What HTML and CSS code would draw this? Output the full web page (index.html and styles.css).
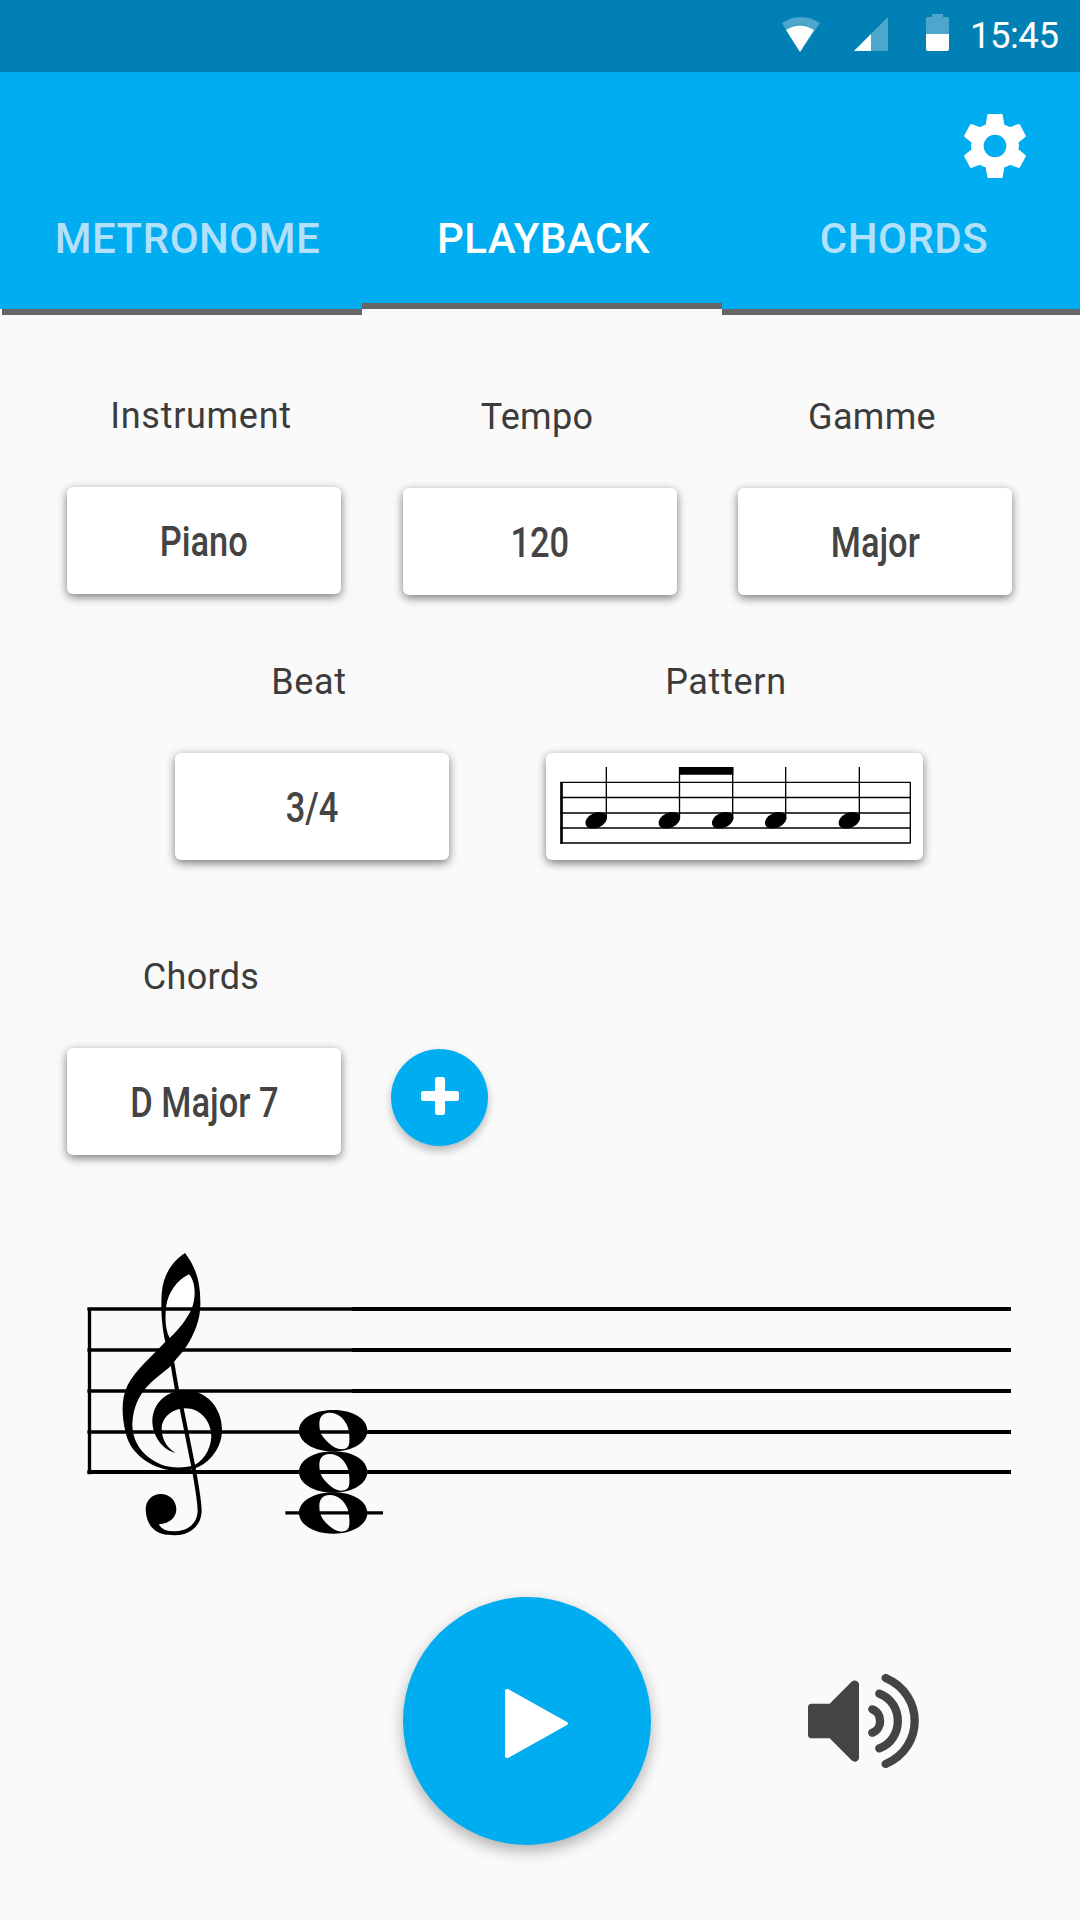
FILE: index.html
```html
<!DOCTYPE html>
<html lang="en">
<head>
<meta charset="utf-8">
<title>Playback</title>
<link rel="stylesheet" href="styles.css">
</head>
<body>
<div class="status-bar">
  <svg class="status-icons" viewBox="0 0 600 216" aria-hidden="true">
    <path class="dim" d="M66 69Q123 33 180 69L120 156Z"/>
    <path class="lit" d="M78 90Q120 64 162 90L120 156Z"/>
    <path class="dim" d="M384 51V153H282Z"/>
    <path class="lit" d="M333 102V153H282Z"/>
    <path class="dim" d="M516 42H549V51H562Q567 51 567 56V102H498V56Q498 51 503 51H516Z"/>
    <path class="lit" d="M498 102H567V147Q567 153 561 153H504Q498 153 498 147Z"/>
  </svg>
  <span class="clock">15:45</span>
</div>
<header class="app-bar">
  <div class="actions">
    <svg class="gear" viewBox="612 342 186 192" aria-label="Settings">
      <path fill-rule="evenodd" d="M684 342H726L728 345L733 374Q742 376 748 381Q756 381 766 375L777 372L780 374L798 408L796 411L775 428Q779 438 775 448L796 465L798 468L780 502L777 504L766 500Q756 495 748 495Q742 500 733 502L728 531L726 534H684L682 531L677 502Q668 500 662 495Q654 495 644 500L633 504L630 502L612 468L614 465L635 448Q631 438 635 428L614 411L612 408L630 374L633 372L644 375Q654 381 662 381Q668 376 677 374L682 345ZM705 404A34 34 0 1 0 705 472A34 34 0 1 0 705 404Z"/>
    </svg>
  </div>
  <nav class="tabs">
    <a class="tab tab-metronome"><span>METRONOME</span></a>
    <a class="tab tab-active"><span>PLAYBACK</span></a>
    <a class="tab tab-chords"><span>CHORDS</span></a>
  </nav>
</header>
<main>
  <section class="row row-top">
    <div class="field"><div class="label label-loose">Instrument</div><div class="card"><span class="value">Piano</span></div></div>
    <div class="field field-low"><div class="label">Tempo</div><div class="card"><span class="value">120</span></div></div>
    <div class="field field-low"><div class="label">Gamme</div><div class="card"><span class="value">Major</span></div></div>
  </section>
  <section class="row row-mid">
    <div class="field"><div class="label label-loose">Beat</div><div class="card"><span class="value">3/4</span></div></div>
    <div class="field field-wide"><div class="label label-loose">Pattern</div>
      <div class="card">
        <svg class="pattern" viewBox="78 339 1131 321" aria-hidden="true">
          <defs><ellipse id="head" rx="34" ry="22.500" transform="rotate(-24)"/></defs>
          <path class="thin" d="M121 427H1172M121 472.500H1172M121 519H1172M121 564H1172M121 609H1172M1171 427V609"/>
          <path class="thick" d="M124.500 426V611"/>
          <path class="thin" d="M259 381V535M478.500 381V535M638 381V535M797 381V535M1018 381V535"/>
          <path d="M477 381H640V404H477Z"/>
          <use href="#head" x="228.500" y="541"/>
          <use href="#head" x="448" y="541"/>
          <use href="#head" x="608" y="541"/>
          <use href="#head" x="767" y="541"/>
          <use href="#head" x="988" y="541"/>
        </svg>
      </div>
    </div>
  </section>
  <section class="row row-chords">
    <div class="field"><div class="label">Chords</div><div class="card"><span class="value">D Major 7</span></div></div>
    <div class="add">
      <svg viewBox="0 0 38 38" aria-hidden="true"><path d="M16 0H22Q24 0 24 2V14H36Q38 14 38 16V22Q38 24 36 24H24V36Q24 38 22 38H16Q14 38 14 36V24H2Q0 24 0 22V16Q0 14 2 14H14V2Q14 0 16 0Z"/></svg>
    </div>
  </section>
  <svg class="staff" viewBox="0 0 2835 930" aria-hidden="true">
    <defs>
      <path id="whole" fill-rule="evenodd" d="M790 510C850 510 892 537 892 572C892 606 850 634 790 634C730 634 687 606 687 572C687 537 730 510 790 510ZM779 518C755 518 748 534 748 552C748 567 751 582 760 592C777 613 795 627 815 628C832 627 837 620 838 606C839 592 838 575 833 560C824 538 806 518 779 518Z"/>
    </defs>
    <path fill="#fff" d="M357 103C315 125 292 165 288 202H366C382 160 372 120 357 103Z"/>
    <path class="line-light" d="M52 207H846M52 330H846M52 453H846M52 576H846M58.500 202V703"/>
    <path class="line-heavy" d="M846 207H2823M846 330H2823M846 453H2823M846 576H2823M52 696H2823"/>
    <path class="line-light" d="M646 818.500H939"/>
    <path fill-rule="evenodd" d="M345 39C310 62 280 100 275 160C272 210 276 265 286 305C245 350 195 390 172 437C153 475 155 530 167 578C180 640 245 692 330 693C400 695 456 635 456 570C456 500 405 451 348 451C290 451 247 490 247 545C248 590 280 630 316 638C288 622 275 595 275 563C278 530 308 506 346 505C392 505 424 545 424 590C421 635 395 668 365 678C335 685 300 683 275 674C215 648 187 605 187 552C189 500 208 468 228 443C250 418 278 398 300 380L315 362C325 350 342 332 350 318C375 280 391 235 391 195C392 130 380 85 345 39ZM357 103C373 120 381 160 366 204C350 240 322 273 299 294C286 270 284 235 289 195C295 160 320 120 357 103Z"/>
    <path class="stem" d="M307 368Q318 435 323 460L336 510L372 690Q389 785 389 815C386 860 350 880 313 880C290 880 270 874 256 862"/>
    <path d="M227 808C227 782 246 762 272 762C300 762 319 783 319 808C319 832 300 851 267 853C270 863 285 871 295 874L290 884C250 880 228 850 227 808Z"/>
    <use href="#whole"/>
    <use href="#whole" y="124"/>
    <use href="#whole" y="247"/>
  </svg>
  <section class="player">
    <div class="play">
      <svg viewBox="0 0 63 69" aria-hidden="true"><path d="M2 0Q0 0 0 2V67Q0 69 3 69L62 36Q64 34.500 62 33L3 0Z"/></svg>
    </div>
    <svg class="volume" viewBox="84 70 333 288" aria-label="Volume">
      <path d="M94 162H149L214 97Q224 89 233 96Q237 99 237 104V326Q236 334 228 336Q220 337 214 331L149 266H94Q84 265 84 255V173Q84 163 94 162Z"/>
      <path class="wave" d="M277 179C308 190 308 239 277 249M298 132C372 160 372 268 298 296M317 85C433 135 433 293 317 343"/>
    </svg>
  </section>
</main>
</body>
</html>
```
FILE: styles.css
```css
* { box-sizing: border-box; }
body {
  margin: 0;
  width: 1080px;
  height: 1920px;
  overflow: hidden;
  background: #fafafa;
  font-family: Roboto, "Liberation Sans", sans-serif;
}
svg { display: block; }
.status-bar {
  display: flex;
  height: 72px;
  padding-left: 760px;
  background: #0080b4;
  color: #fff;
}
.status-icons { width: 200px; height: 72px; flex: none; }
.dim { fill: #4da6cb; }
.lit { fill: #fff; }
.clock { margin-left: 10px; font-size: 36.5px; line-height: 72px; letter-spacing: -0.5px; }
.app-bar { height: 243px; background: linear-gradient(#00adf0 237px, #fafafa 237px); }
.actions { display: flex; justify-content: flex-end; padding: 42px 54px 0 0; }
.gear { width: 62px; height: 64px; fill: #fff; }
.tabs { display: flex; padding-left: 2px; height: 137px; align-items: flex-end; }
.tab {
  width: 360px;
  height: 137px;
  padding-top: 36px;
  border-bottom: 6px solid #666;
  color: #b3e0fa;
  font-size: 42px;
  line-height: 50px;
  font-weight: 500;
  letter-spacing: 0.5px;
  text-align: center;
  flex: none;
}
.tab-metronome { padding-left: 11px; }
.tab-active { height: 131px; margin-bottom: 6px; padding-left: 3px; color: #fff; }
.tab-chords { padding-left: 4px; }
main { padding-top: 80px; }
.row { display: flex; }
.row-top { padding-left: 67px; gap: 62px; height: 266px; }
.row-mid { padding-left: 175px; gap: 97px; height: 295px; }
.row-chords { padding-left: 67px; gap: 50px; height: 284px; }
.field { width: 274px; }
.field-low { padding-top: 1px; }
.row-top .field:last-child { margin-left: -1px; }
.field-wide { width: 377px; }
.label {
  height: 42px;
  margin-bottom: 50px;
  padding-right: 6px;
  font-size: 36px;
  line-height: 42px;
  letter-spacing: 0.3px;
  text-align: center;
  color: #3c3c3c;
}
.label-loose { letter-spacing: 0.7px; }
.field-wide .label { padding-right: 17px; }
.card {
  height: 107px;
  border-radius: 6px;
  background: #fff;
  box-shadow: 0 3px 10px rgba(0, 0, 0, 0.52);
  text-align: center;
  color: #444;
}
.value {
  display: inline-block;
  padding-top: 1px;
  font-size: 42px;
  line-height: 107px;
  font-weight: 500;
  transform: scaleX(0.82);
}
.pattern { width: 377px; height: 107px; }
.thin { fill: none; stroke: #000; stroke-width: 4; }
.thick { fill: none; stroke: #000; stroke-width: 8; }
.add, .play { display: flex; border-radius: 50%; background: #00adf0; flex: none; }
.add {
  width: 97px;
  height: 97px;
  margin-top: 93px;
  padding: 28px 0 0 30px;
  box-shadow: 0 5px 9px rgba(0, 0, 0, 0.26);
}
.add svg { width: 38px; height: 38px; fill: #fff; }
.staff { width: 945px; height: 310px; margin-left: 70px; }
.line-light { stroke: #000; stroke-width: 10; }
.line-heavy { stroke: #000; stroke-width: 12; }
.stem { fill: none; stroke: #000; stroke-width: 12; }
.player { display: flex; padding: 47px 0 0 403px; }
.play {
  width: 248px;
  height: 248px;
  padding: 92px 0 0 102px;
  box-shadow: 0 6px 15px rgba(0, 0, 0, 0.3);
}
.play svg { width: 63px; height: 69px; fill: #fff; }
.volume { width: 111px; height: 96px; margin: 76px 0 0 157px; fill: #444; }
.wave { fill: none; stroke: #444; stroke-width: 25; stroke-linecap: round; }
```
